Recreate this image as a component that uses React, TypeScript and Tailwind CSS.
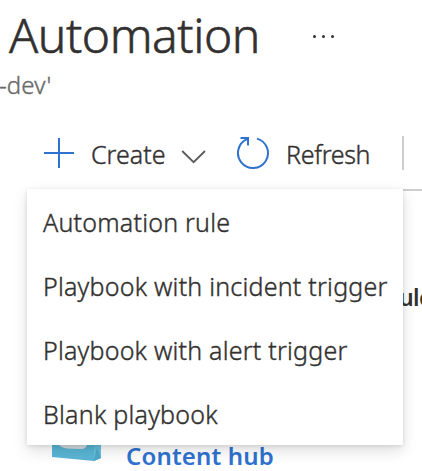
const menuItems = [
  { label: 'Automation rule', spacing: 'tracking-[0.22px]' },
  { label: 'Playbook with incident trigger', spacing: 'tracking-[0.22px]' },
  { label: 'Playbook with alert trigger', spacing: 'tracking-[0.21px]' },
  { label: 'Blank playbook', spacing: 'tracking-[0.24px]' },
];

function PlusIcon() {
  return (
    <svg className="h-[30px] w-[30px] shrink-0" viewBox="0 0 30 30" fill="none" stroke="#2f72cf" strokeWidth="2">
      <path d="M15 0v30M0 15h30" />
    </svg>
  );
}

function ChevronIcon() {
  return (
    <svg className="h-[14px] w-[26px] shrink-0" viewBox="0 0 26 14" fill="none" stroke="#5c5b5a" strokeWidth="1.8">
      <path d="M1.2 1 12.6 12.2 24 1" />
    </svg>
  );
}

function RefreshIcon() {
  return (
    <svg className="h-[34px] w-[34px] shrink-0" viewBox="0 0 34 34" fill="none" stroke="#2f72cf" strokeWidth="2">
      <path d="M21 2.6A15 15 0 1 1 11.2 3.2" />
      <path d="M4.5 2H12v7.5" />
    </svg>
  );
}

function PackageIcon() {
  return (
    <svg className="h-[60px] w-[50px] shrink-0" viewBox="0 0 50 60">
      <path d="M0 0h42v60L0 56z" fill="#5ab6d5" />
      <path d="M42 0h7v57l-7 3z" fill="#66c0dc" />
      <path d="M42 59l3-12 4 10-7 3z" fill="#4fa9c9" />
      <path d="M6 0h29v42q0 6-6 6l-14-.6q-6-.4-9-5z" fill="#d5dce0" />
    </svg>
  );
}

export default function App() {
  return (
    <div className="relative flex h-[471px] w-[422px] flex-col overflow-hidden bg-white font-['Noto_Sans','Open_Sans',sans-serif] text-[#323130]">
      <header className="h-[136px]">
        <div className="flex h-[68px] items-start">
          <h1 className="ml-[9px] w-[304px] whitespace-nowrap pt-[3px] text-[48px] font-light leading-[64px] tracking-[-0.45px] [-webkit-text-stroke:0.6px]">Automation</h1>
          <div className="mt-[35px] flex gap-[6px]">
            <span className="size-[3px] rounded-full bg-[#323130]" />
            <span className="size-[3px] rounded-full bg-[#323130]" />
            <span className="size-[3px] rounded-full bg-[#323130]" />
          </div>
        </div>
        <p className="ml-[-1px] text-[24px] font-light leading-[34px] tracking-[0.1px] text-[#6b6a69] [-webkit-text-stroke:0.4px]">-dev'</p>
      </header>

      <nav className="flex h-[53px] items-start pl-[44px]">
        <div className="mt-[2px]"><PlusIcon /></div>
        <span className="ml-[17px] w-[90px] whitespace-nowrap text-[25px] font-light leading-[36px] [-webkit-text-stroke:0.4px]">Create</span>
        <div className="mt-[14px]"><ChevronIcon /></div>
        <div className="ml-[29px]"><RefreshIcon /></div>
        <span className="ml-[16px] w-[116px] whitespace-nowrap text-[25px] font-light leading-[36px] tracking-[-0.3px] [-webkit-text-stroke:0.4px]">Refresh</span>
        <span className="h-[34px] w-[2px] shrink-0 bg-[#cfcecd]" />
      </nav>

      <main className="flex h-[282px] flex-col">
        <div className="ml-[100px] h-[2px] shrink-0 bg-[#cfcecd]" />
        <div className="flex h-[195px] shrink-0 items-start pl-[399px] pt-[90px]">
          <strong className="text-[23px] font-semibold leading-[32px] tracking-[-0.6px]">ule</strong>
        </div>
        <div className="flex items-start pl-[52px]">
          <div className="pt-[15px]"><PackageIcon /></div>
          <strong className="ml-[24px] whitespace-nowrap pt-[51px] text-[24px] font-semibold leading-[38px] tracking-[0.15px] text-[#2f72cf]">Content hub</strong>
        </div>
      </main>

      <ul className="absolute left-[27px] top-[189px] flex w-[376px] flex-col bg-white shadow-[0_6px_14px_rgba(0,0,0,0.13),0_1px_4px_rgba(0,0,0,0.11)]">
        {menuItems.map((item) => (
          <li key={item.label} className="flex h-[64px] items-center whitespace-nowrap pl-[16px] pt-[4px] text-[25px] font-light [-webkit-text-stroke:0.4px]">
            <span className={item.spacing}>{item.label}</span>
          </li>
        ))}
      </ul>
    </div>
  );
}
